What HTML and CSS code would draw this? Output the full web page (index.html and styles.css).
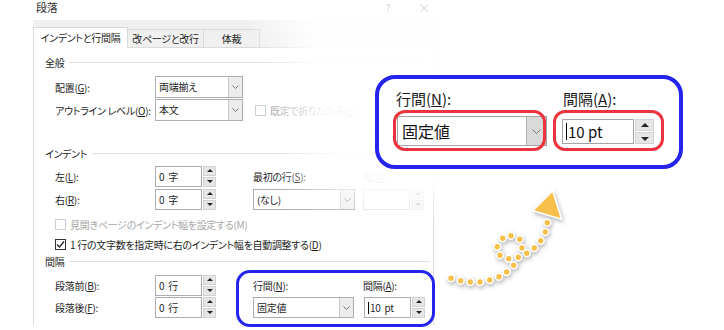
FILE: index.html
```html
<!DOCTYPE html>
<html lang="ja">
<head>
    <meta charset="UTF-8">
    <title>段落</title>
    <link rel="stylesheet" href="styles.css">
</head>
<body>
    <div class="dialog">
        <div class="titlebar">
            <span class="title">段落</span>
            <span class="help">?</span>
            <span class="close">×</span>
        </div>
        <div class="tabs">
            <div class="tab active">インデントと行間隔</div>
            <div class="tab t2">改ページと改行</div>
            <div class="tab t3">体裁</div>
        </div>
        <div class="panel">
            <div class="group-title">全般</div>
            <div class="grid grid-general">
                <span class="lbl">配置(<u>G</u>):</span>
                <div class="select w88"><span class="val">両端揃え</span><span class="drop"><svg width="7" height="4" viewBox="0 0 7 4"><polyline points="0.5,0.5 3.5,3.5 6.5,0.5" /></svg></span></div>
                <span></span><span></span>
                <span class="lbl">アウトライン レベル(<u>O</u>):</span>
                <div class="select w88"><span class="val">本文</span><span class="drop"><svg width="7" height="4" viewBox="0 0 7 4"><polyline points="0.5,0.5 3.5,3.5 6.5,0.5" /></svg></span></div>
                <div class="check off span2"><span class="box"></span><span>既定で折りたたみ(<u>E</u>)</span></div>
            </div>

            <div class="group-title g-indent">インデント</div>
            <div class="grid grid-indent">
                <span class="lbl">左(<u>L</u>):</span>
                <div class="spin"><span class="field">0 字</span><span class="btns"><i class="up"></i><i class="down"></i></span></div>
                <span class="lbl2">最初の行(<u>S</u>):</span>
                <span class="lbl2 off">幅(<u>Y</u>):</span>
                <span class="lbl">右(<u>R</u>):</span>
                <div class="spin"><span class="field">0 字</span><span class="btns"><i class="up"></i><i class="down"></i></span></div>
                <div class="select w102"><span class="val">(なし)</span><span class="drop"><svg width="7" height="4" viewBox="0 0 7 4"><polyline points="0.5,0.5 3.5,3.5 6.5,0.5" /></svg></span></div>
                <div class="spin off"><span class="field"></span><span class="btns"><i class="up"></i><i class="down"></i></span></div>
            </div>
            <div class="check off row-check"><span class="box"></span><span>見開きページのインデント幅を設定する(M)</span></div>
            <div class="check row-check"><span class="box"><svg width="9" height="9" viewBox="0 0 9 9"><polyline points="1,4.5 3.5,7 8,1.5" /></svg></span><span>1 行の文字数を指定時に右のインデント幅を自動調整する(<u>D</u>)</span></div>

            <div class="group-title g-spacing">間隔</div>
            <div class="grid grid-spacing">
                <span class="lbl">段落前(<u>B</u>):</span>
                <div class="spin"><span class="field">0 行</span><span class="btns"><i class="up"></i><i class="down"></i></span></div>
                <span class="lbl2">行間(<u>N</u>):</span>
                <span class="lbl2">間隔(<u>A</u>):</span>
                <span class="lbl">段落後(<u>F</u>):</span>
                <div class="spin"><span class="field">0 行</span><span class="btns"><i class="up"></i><i class="down"></i></span></div>
                <div class="select w101"><span class="val">固定値</span><span class="drop"><svg width="7" height="4" viewBox="0 0 7 4"><polyline points="0.5,0.5 3.5,3.5 6.5,0.5" /></svg></span></div>
                <div class="spin"><span class="field"><b class="caret"></b>10 pt</span><span class="btns"><i class="up"></i><i class="down"></i></span></div>
            </div>
        </div>
    </div>

    <!-- 右上のフェード -->
    <div class="fade"></div>

    <!-- 小さい枠 -->
    <div class="mark"></div>

    <!-- 拡大表示 -->
    <div class="callout">
        <div class="zcol c1">
            <span class="zlbl">行間(<u>N</u>):</span>
            <div class="ring r1">
                <div class="zselect"><span class="val">固定値</span><span class="drop"><svg width="9" height="5" viewBox="0 0 9 5"><polyline points="0.5,0.5 4.5,4.5 8.5,0.5" /></svg></span></div>
            </div>
        </div>
        <div class="zcol c2">
            <span class="zlbl">間隔(<u>A</u>):</span>
            <div class="ring r2">
                <div class="zspin"><span class="field"><b class="caret"></b>10 pt</span><span class="btns"><i class="up"></i><i class="down"></i></span></div>
            </div>
        </div>
    </div>

    <svg class="arrow" width="130" height="115" viewBox="0 0 130 115">
        <g class="dots">
            <circle cx="11" cy="98.3" r="3.5"/>
            <circle cx="20.7" cy="100.7" r="3.5"/>
            <circle cx="30.3" cy="102" r="3.5"/>
            <circle cx="40" cy="102" r="3.5"/>
            <circle cx="49.7" cy="100" r="3.5"/>
            <circle cx="59" cy="96.7" r="3.5"/>
            <circle cx="66.7" cy="92" r="3.5"/>
            <circle cx="73.7" cy="85.3" r="3.5"/>
            <circle cx="68.7" cy="78.7" r="3.5"/>
            <circle cx="60" cy="75.3" r="3.5"/>
            <circle cx="57.3" cy="66.7" r="3.5"/>
            <circle cx="62.7" cy="58.3" r="3.5"/>
            <circle cx="71" cy="55.7" r="3.5"/>
            <circle cx="79.7" cy="59.3" r="3.5"/>
            <circle cx="82" cy="68" r="3.5"/>
            <circle cx="78.3" cy="77.3" r="3.5"/>
            <circle cx="86.7" cy="73.3" r="3.5"/>
            <circle cx="94.3" cy="68" r="3.5"/>
            <circle cx="100.7" cy="60.7" r="3.5"/>
            <circle cx="105.3" cy="52" r="3.5"/>
            <circle cx="107.3" cy="42.7" r="3.5"/>
            <polygon points="112.7,10.7 92.7,30.7 121.7,39.3"/>
        </g>
    </svg>
</body>
</html>
```

FILE: styles.css
```css
*{
    margin:0;
    padding:0;
    box-sizing:border-box;
}
body{
    position:relative;
    width:724px;
    height:330px;
    overflow:hidden;
    background:#fff;
    font-family:"Noto Sans CJK JP","Noto Sans",sans-serif;
    font-feature-settings:"palt";
    font-size:10px;
    letter-spacing:-0.3px;
    color:#1e1e1e;
}
u{
    text-decoration:underline;
    text-underline-offset:1px;
}

/* ダイアログ */
.titlebar{
    display:flex;
    height:20px;
    line-height:15px;
    padding-left:36px;
    white-space:nowrap;
}
.title{
    color:#333;
    font-size:11px;
}
.help{
    margin-left:auto;
    color:#d8d8d8;
}
.close{
    position:relative;
    z-index:2;
    margin-left:28px;
    margin-right:294px;
    color:#d8d8d8;
    font-size:12px;
}
.help{
    position:relative;
    z-index:2;
}
.tabs{
    display:flex;
    align-items:flex-end;
    width:404px;
    height:27px;
    margin-left:33px;
    background:#f0f0f0;
    white-space:nowrap;
}
.tab{
    height:18px;
    line-height:17px;
    text-align:center;
    border:1px solid #d9d9d9;
    border-bottom:none;
    margin-left:-1px;
}
.tab.active{
    position:relative;
    z-index:1;
    width:95px;
    height:21px;
    line-height:20px;
    margin-left:0;
    margin-bottom:-1px;
    background:#fff;
}
.tab.t2{
    width:77px;
}
.tab.t3{
    width:57px;
}
.panel{
    width:401px;
    height:278px;
    margin-left:33px;
    padding-left:11px;
    border:1px solid #dadada;
    border-bottom:none;
    white-space:nowrap;
}
.group-title{
    display:flex;
    align-items:center;
    gap:5px;
    height:14px;
    margin-top:7px;
}
.group-title::after{
    content:"";
    flex:1;
    height:1px;
    margin-right:3px;
    background:#e0e0e0;
}
.group-title.g-indent{
    margin-top:25px;
}
.group-title.g-spacing{
    margin-top:0;
}
.grid{
    display:grid;
    grid-template-columns:110px 98px 110px 63px;
    align-items:center;
    margin-top:7px;
}
.grid-general{
    grid-auto-rows:22px;
    row-gap:1px;
}
.grid-indent{
    grid-auto-rows:21px;
    row-gap:2px;
    margin-top:6px;
}
.grid-spacing{
    grid-auto-rows:21px;
    row-gap:1px;
}
.lbl{
    padding-left:10px;
}
.off{
    color:#a8a8a8;
}
.span2{
    grid-column:3 / span 2;
    padding-left:2px;
}

/* コントロール */
.select{
    display:flex;
    height:22px;
    border:1px solid #adadad;
    background:#fff;
}
.grid-indent .select,.grid-spacing .select{
    height:21px;
}
.w88{ width:88px; }
.w102{ width:102px; }
.w101{ width:101px; }
.select .val{
    flex:1;
    padding-left:3px;
    line-height:19px;
}
.select .drop{
    display:flex;
    align-items:center;
    justify-content:center;
    width:14px;
    background:#ececec;
    border-left:1px solid #c8c8c8;
}
.drop polyline{
    fill:none;
    stroke:#777;
    stroke-width:1;
}
.spin{
    display:flex;
    gap:1px;
    width:61px;
    height:21px;
}
.grid-spacing .spin:last-child{
    margin-left:1px;
}
.spin .field{
    display:flex;
    align-items:center;
    flex:1;
    padding-left:3px;
    word-spacing:2px;
    border:1px solid #adadad;
    background:#fff;
}
.spin.off .field{
    border-color:#e0e0e0;
}
.btns{
    display:flex;
    flex-direction:column;
    gap:1px;
    width:13px;
}
.btns i{
    position:relative;
    flex:1;
    background:#e6e6e6;
    border:1px solid #d2d2d2;
}
.btns i::after{
    content:"";
    position:absolute;
    left:50%;
    top:50%;
    margin:-2px 0 0 -3px;
    border-left:3px solid transparent;
    border-right:3px solid transparent;
}
.btns .up::after{
    border-bottom:3px solid #222;
}
.btns .down::after{
    border-top:3px solid #222;
}
.spin.off .btns i{
    background:#f4f4f4;
    border-color:#ececec;
}
.spin.off .btns .up::after{ border-bottom-color:#c8c8c8; }
.spin.off .btns .down::after{ border-top-color:#c8c8c8; }
.caret{
    display:inline-block;
    width:1px;
    height:12px;
    margin-right:1px;
    background:#000;
}
.check{
    display:flex;
    align-items:center;
    gap:4px;
}
.row-check{
    height:20px;
    padding-left:10px;
}
.row-check.off{
    margin-top:4px;
}
.check .box{
    display:flex;
    align-items:center;
    justify-content:center;
    width:11px;
    height:11px;
    border:1px solid #333;
    background:#fff;
}
.check.off .box{
    border-color:#cfcfcf;
}
.check .box polyline{
    fill:none;
    stroke:#222;
    stroke-width:1.2;
}

/* 右上を白く飛ばす */
.fade{
    position:absolute;
    left:235px;
    top:0;
    width:210px;
    height:225px;
    background:linear-gradient(78deg,rgba(255,255,255,0) 20%,rgba(255,255,255,.88) 45%,rgba(255,255,255,.93) 100%);
    -webkit-mask-image:linear-gradient(180deg,#000 80%,transparent 100%);
    mask-image:linear-gradient(180deg,#000 80%,transparent 100%);
}

/* 青枠 */
.mark{
    position:absolute;
    left:236px;
    top:270px;
    width:199px;
    height:57px;
    border:3px solid #2424ee;
    border-radius:14px;
}
.callout{
    position:absolute;
    left:375px;
    top:75px;
    display:flex;
    gap:15px;
    width:308px;
    height:94px;
    padding:11px 0 0 18px;
    border:4px solid #2424ee;
    border-radius:20px;
    background:#fff;
    letter-spacing:0;
}
.zcol{
    display:flex;
    flex-direction:column;
}
.zcol.c1{ width:150px; }
.zcol.c2{ width:92px; }
.zlbl{
    height:18px;
    line-height:18px;
    font-size:15px;
    color:#1a1a1a;
}
.zcol.c1 .zlbl{ margin-left:-1px; }
.zcol.c2 .zlbl{ margin-left:1px; }
.ring{
    position:relative;
    margin-top:8px;
}
.ring::after{
    content:"";
    position:absolute;
    border:3.5px solid #ec3440;
    border-radius:12px;
}
.ring.r1::after{
    inset:-6px 1px -5px -4px;
}
.ring.r2{
    margin-top:11px;
}
.ring.r2::after{
    inset:-9px -10px -7px -9px;
}
.zselect{
    display:flex;
    width:150px;
    height:30px;
    border:1px solid #a5a5a5;
    background:#fff;
}
.zselect .val{
    flex:1;
    padding-left:4px;
    font-size:16px;
    line-height:28px;
    color:#111;
}
.zselect .drop{
    display:flex;
    align-items:center;
    justify-content:center;
    width:20px;
    background:#dadada;
    border-left:1px solid #b0b0b0;
}
.zspin{
    display:flex;
    gap:1px;
    width:92px;
    height:25px;
}
.zspin .field{
    display:flex;
    align-items:center;
    flex:1;
    padding-left:3px;
    font-size:15px;
    border:1px solid #a5a5a5;
    background:#fff;
    color:#111;
}
.zspin .caret{
    height:17px;
}
.zspin .btns{
    width:19px;
}
.zspin .btns i::after{
    margin:-2px 0 0 -4px;
    border-left-width:4px;
    border-right-width:4px;
}
.zspin .btns .up::after{ border-bottom-width:4px; }
.zspin .btns .down::after{ border-top-width:4px; margin-top:-1px; }

/* 矢印 */
.arrow{
    position:absolute;
    left:440px;
    top:180px;
    filter:drop-shadow(1px 2px 2px rgba(0,0,0,.3));
}
.dots circle,.dots polygon{
    fill:#f8bf4a;
    stroke:#fff;
    stroke-width:1.6;
    stroke-linejoin:round;
}
```
